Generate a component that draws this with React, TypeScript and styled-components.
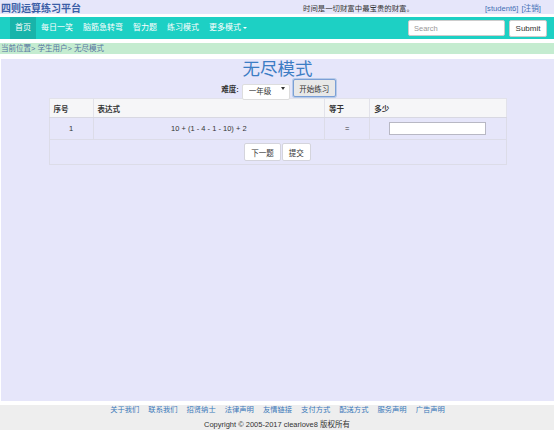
import * as React from "react";
import styled, { createGlobalStyle } from "styled-components";

const GlobalStyle = createGlobalStyle`
  body {
    margin: 0;
    background: #ffffff;
    font-family: "Liberation Sans", "Noto Sans CJK SC", sans-serif;
    color: #333;
  }
`;

const Page = styled.div`
  width: 554px;
  overflow: hidden;
`;

const TopBar = styled.div`
  height: 14px;
  background: #e6e6fa;
  display: grid;
  grid-template-columns: 303px 182px 1fr;
  align-items: center;
`;

const SiteTitle = styled.div`
  padding-left: 1px;
  font-size: 10px;
  font-weight: bold;
  color: #3b5ea6;
  white-space: nowrap;
`;

const Motto = styled.div`
  font-size: 7.4px;
  color: #333;
  white-space: nowrap;
`;

const UserLinks = styled.div`
  font-size: 7.6px;
  color: #3f6fb5;
  white-space: nowrap;
  overflow: hidden;
  word-spacing: 1px;
`;

const NavBar = styled.div`
  margin-top: 3px;
  height: 22px;
  background: #1dd0c4;
  display: flex;
  align-items: center;
  justify-content: space-between;
  padding: 0 7px 0 10px;
`;

const NavList = styled.div`
  display: flex;
  height: 22px;
`;

const NavItem = styled.div<{ $active?: boolean }>`
  padding: 0 5px;
  height: 22px;
  line-height: 22px;
  font-size: 8px;
  color: #ffffff;
  white-space: nowrap;
  background: ${(p) => (p.$active ? "#18b4aa" : "transparent")};
  display: flex;
  align-items: center;
`;

const Caret = styled.span`
  display: inline-block;
  margin-left: 2px;
  border-left: 2px solid transparent;
  border-right: 2px solid transparent;
  border-top: 2px solid #ffffff;
`;

const SearchForm = styled.div`
  display: flex;
  align-items: center;
  gap: 4px;
`;

const SearchInput = styled.input`
  box-sizing: border-box;
  width: 97px;
  height: 16px;
  border: 1px solid #ccc;
  border-radius: 2px;
  padding: 0 5px;
  font-size: 7.5px;
  font-family: inherit;
  outline: none;
  &::placeholder {
    color: #999;
  }
`;

const SubmitButton = styled.button`
  box-sizing: border-box;
  width: 38px;
  height: 17px;
  padding: 0;
  background: #ffffff;
  border: 1px solid #ccc;
  border-radius: 2px;
  font-size: 8px;
  font-family: inherit;
  color: #333;
`;

const Breadcrumb = styled.div`
  margin-top: 4px;
  height: 11px;
  line-height: 11px;
  background: #c4ecd0;
  padding-left: 1px;
  font-size: 7.5px;
  color: #55739f;
`;

const Main = styled.div`
  margin: 5px 0 0 1px;
  height: 342px;
  background: #e6e6fa;
  display: flex;
  flex-direction: column;
  align-items: center;
`;

const PageTitle = styled.div`
  margin-top: 1px;
  font-size: 17.5px;
  line-height: 19px;
  color: #3c7dc4;
`;

const Controls = styled.div`
  display: flex;
  align-items: center;
  height: 18px;
  margin-left: 2px;
`;

const Label = styled.span`
  font-size: 7.5px;
  font-weight: bold;
  color: #333;
  margin-right: 3px;
`;

const SelectBox = styled.div`
  position: relative;
  width: 48px;
  height: 16px;
`;

const Select = styled.select`
  box-sizing: border-box;
  width: 48px;
  height: 16px;
  appearance: none;
  background: #ffffff;
  border: 1px solid #ddd;
  border-radius: 2px;
  padding: 0 0 0 6px;
  font-size: 7.5px;
  font-family: inherit;
  color: #333;
  outline: none;
`;

const SelectArrow = styled.span`
  position: absolute;
  right: 5px;
  top: 7px;
  border-left: 2px solid transparent;
  border-right: 2px solid transparent;
  border-top: 3px solid #333;
  pointer-events: none;
`;

const StartButton = styled.button`
  box-sizing: border-box;
  margin-left: 3px;
  width: 43px;
  height: 18px;
  padding: 0;
  background: #e8e8e8;
  border: 1px solid #7b9fd6;
  border-radius: 2px;
  box-shadow: 0 0 0 1px #b7cbe9;
  font-size: 7.5px;
  font-family: inherit;
  color: #333;
`;

const QuizTable = styled.table`
  margin-top: 1px;
  width: 458px;
  table-layout: fixed;
  border-collapse: collapse;
  border: 1px solid #dcdce8;
  font-size: 7.5px;
  color: #333;
`;

const HeadCell = styled.th<{ $w: number }>`
  width: ${(p) => p.$w}px;
  height: 18px;
  padding: 0 0 0 4px;
  text-align: left;
  font-weight: bold;
  background: #f6f6f8;
  border: 1px solid #e2e2ea;
  border-bottom: 1px solid #d8d8e2;
`;

const Cell = styled.td`
  height: 21px;
  padding: 0;
  text-align: center;
  border: 1px solid #dcdce8;
`;

const ActionCell = styled.td`
  height: 24px;
  padding: 0;
  text-align: center;
  border: 1px solid #dcdce8;
`;

const AnswerInput = styled.input`
  box-sizing: border-box;
  width: 97px;
  height: 13px;
  border: 1px solid #b8b8c4;
  background: #ffffff;
  outline: none;
  vertical-align: middle;
`;

const ActionButton = styled.button`
  box-sizing: border-box;
  height: 18px;
  padding: 0 6px;
  margin: 0 0.5px;
  background: #ffffff;
  border: 1px solid #d4d4dc;
  border-radius: 2px;
  font-size: 7.5px;
  font-family: inherit;
  color: #333;
  vertical-align: middle;
`;

const Footer = styled.div`
  margin-top: 4px;
  height: 30px;
  background: #eeeeee;
  display: flex;
  flex-direction: column;
  align-items: center;
`;

const FooterLinks = styled.div`
  display: flex;
  gap: 9px;
  height: 9px;
  line-height: 9px;
  padding-left: 1px;
`;

const FooterLink = styled.a`
  font-size: 7.3px;
  color: #3a78b9;
  text-decoration: none;
`;

const Copyright = styled.div`
  margin-top: 6px;
  font-size: 7.5px;
  line-height: 9px;
  color: #333;
`;

const navItems = ["首页", "每日一笑", "脑筋急转弯", "智力题", "练习模式"];
const footerLinks = [
  "关于我们",
  "联系我们",
  "招贤纳士",
  "法律声明",
  "友情链接",
  "支付方式",
  "配送方式",
  "服务声明",
  "广告声明",
];

export default function App() {
  return (
    <Page>
      <GlobalStyle />
      <TopBar>
        <SiteTitle>四则运算练习平台</SiteTitle>
        <Motto>时间是一切财富中最宝贵的财富。</Motto>
        <UserLinks>[student6] [注销]</UserLinks>
      </TopBar>
      <NavBar>
        <NavList>
          {navItems.map((item, i) => (
            <NavItem key={item} $active={i === 0}>
              {item}
            </NavItem>
          ))}
          <NavItem>
            更多模式
            <Caret />
          </NavItem>
        </NavList>
        <SearchForm>
          <SearchInput placeholder="Search" />
          <SubmitButton>Submit</SubmitButton>
        </SearchForm>
      </NavBar>
      <Breadcrumb>当前位置&gt; 学生用户&gt; 无尽模式</Breadcrumb>
      <Main>
        <PageTitle>无尽模式</PageTitle>
        <Controls>
          <Label>难度:</Label>
          <SelectBox>
            <Select defaultValue="1">
              <option value="1">一年级</option>
              <option value="2">二年级</option>
              <option value="3">三年级</option>
            </Select>
            <SelectArrow />
          </SelectBox>
          <StartButton>开始练习</StartButton>
        </Controls>
        <QuizTable>
          <thead>
            <tr>
              <HeadCell $w={39}>序号</HeadCell>
              <HeadCell $w={226}>表达式</HeadCell>
              <HeadCell $w={40}>等于</HeadCell>
              <HeadCell $w={131}>多少</HeadCell>
            </tr>
          </thead>
          <tbody>
            <tr>
              <Cell>1</Cell>
              <Cell>10 + (1 - 4 - 1 - 10) + 2</Cell>
              <Cell>=</Cell>
              <Cell>
                <AnswerInput />
              </Cell>
            </tr>
            <tr>
              <ActionCell colSpan={4}>
                <ActionButton>下一题</ActionButton>
                <ActionButton>提交</ActionButton>
              </ActionCell>
            </tr>
          </tbody>
        </QuizTable>
      </Main>
      <Footer>
        <FooterLinks>
          {footerLinks.map((l) => (
            <FooterLink key={l} href="#">
              {l}
            </FooterLink>
          ))}
        </FooterLinks>
        <Copyright>Copyright © 2005-2017 clearlove8 版权所有</Copyright>
      </Footer>
    </Page>
  );
}
